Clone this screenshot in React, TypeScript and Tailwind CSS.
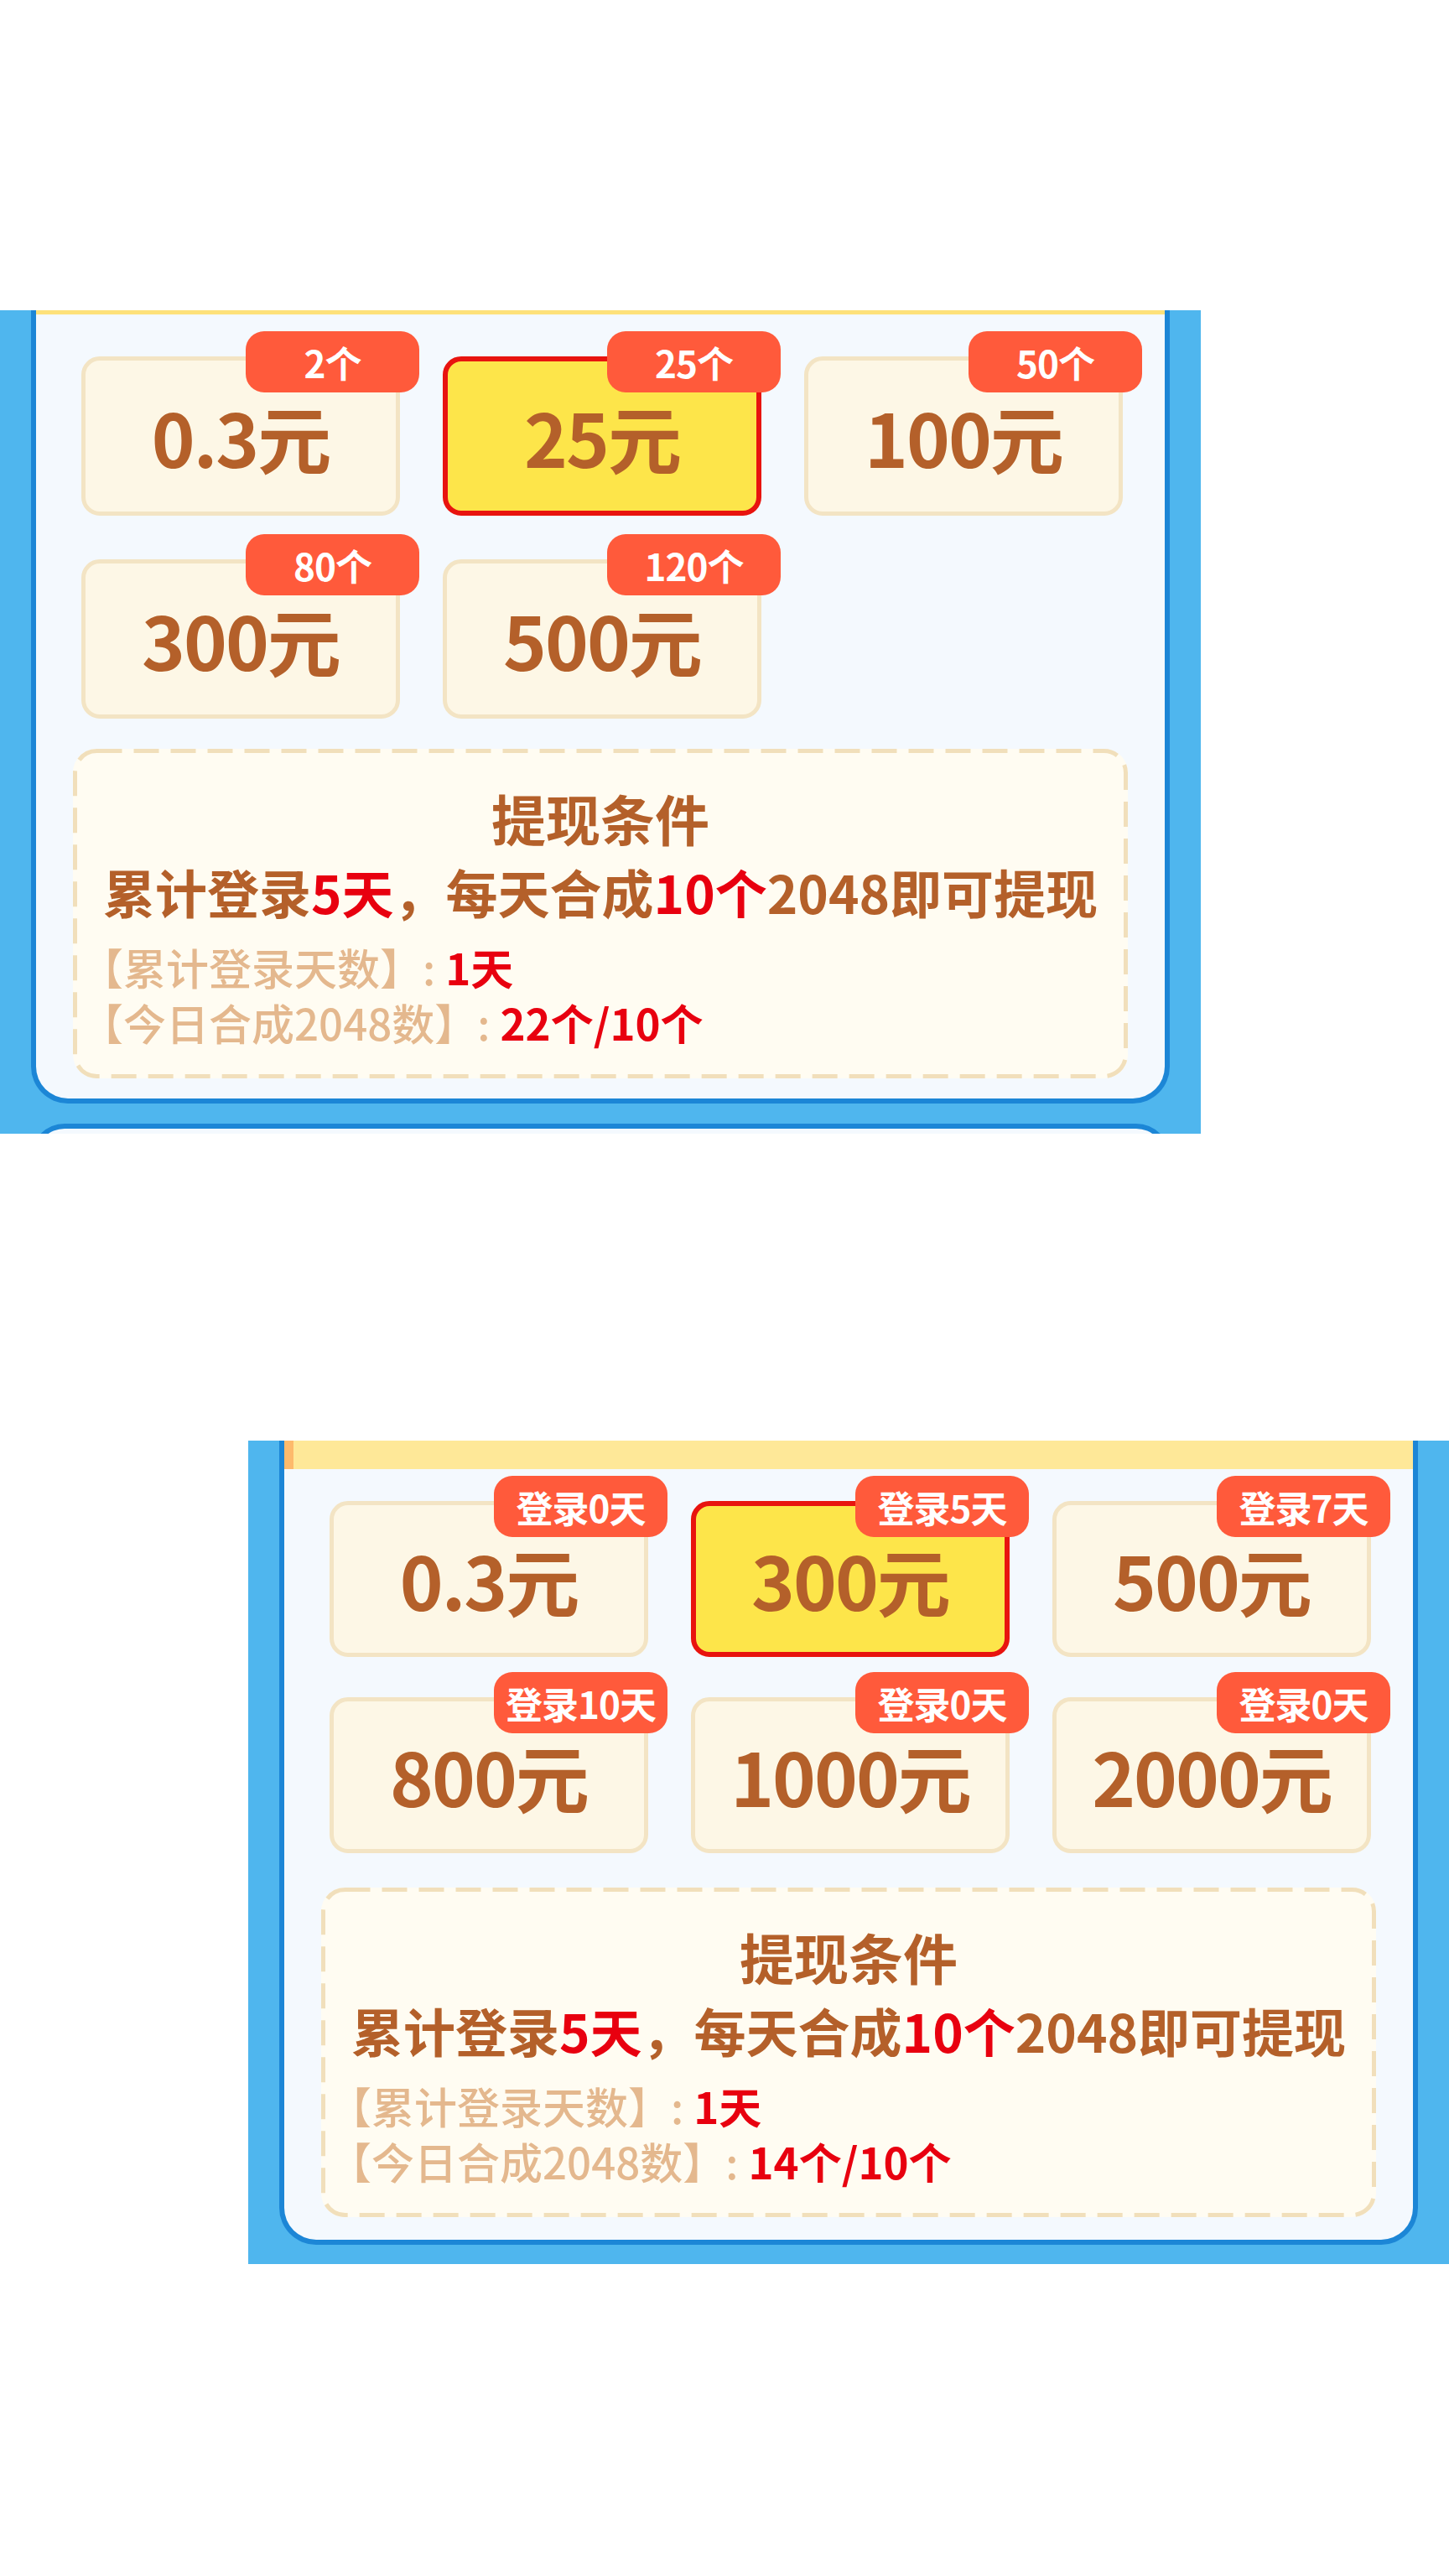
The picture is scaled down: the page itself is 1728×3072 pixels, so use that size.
import React from 'react';

type Tier = { amount: string; tag: string; active?: boolean };

type Progress = { days: string; merged: string };

const firstTiers: Tier[] = [
  { amount: '0.3元', tag: '2个' },
  { amount: '25元', tag: '25个', active: true },
  { amount: '100元', tag: '50个' },
  { amount: '300元', tag: '80个' },
  { amount: '500元', tag: '120个' },
];

const secondTiers: Tier[] = [
  { amount: '0.3元', tag: '登录0天' },
  { amount: '300元', tag: '登录5天', active: true },
  { amount: '500元', tag: '登录7天' },
  { amount: '800元', tag: '登录10天' },
  { amount: '1000元', tag: '登录0天' },
  { amount: '2000元', tag: '登录0天' },
];

const TierCard: React.FC<{ tier: Tier; h: string }> = ({ tier, h }) => (
  <div className={`relative ${h}`}>
    <div
      className={`flex h-full w-full items-center justify-center rounded-[22px] ${
        tier.active ? 'border-[6px] border-[#e8140f] bg-[#fde54a]' : 'border-[5px] border-[#f3e4c4] bg-[#fdf7e6]'
      }`}
    >
      <span className="inline-block h-[88px] overflow-visible text-[88px] font-bold leading-[88px] tracking-[-2px] text-[#b4602a]">
        {tier.amount}
      </span>
    </div>
    {/* count tag sitting over the top-right corner */}
    <div className="absolute -right-[23px] -top-[30px] flex h-[73px] w-[207px] items-center justify-center rounded-[22px] bg-[#ff5a3b]">
      <span className="text-[44px] font-bold leading-none tracking-[-1px] text-white">{tier.tag}</span>
    </div>
  </div>
);

const Conditions: React.FC<{ p: Progress; cls: string }> = ({ p, cls }) => (
  <div className={`relative mx-[44px] rounded-[28px] bg-[#fffcf2] ${cls}`}>
    <svg className="absolute inset-0 h-full w-full" preserveAspectRatio="none">
      <rect x="2.5" y="2.5" width="calc(100% - 5px)" height="calc(100% - 5px)" rx="26" fill="none" stroke="#f1dfbb" strokeWidth="5" strokeDasharray="30 14" />
    </svg>
    <div className="relative flex flex-col pb-[34px] pt-[42px]">
      <div className="text-center text-[65px] font-bold leading-[80px] text-[#b4602a]">提现条件</div>
      <div className="mt-[8px] whitespace-nowrap text-center text-[62px] font-bold leading-[80px] text-[#b4602a]">
        累计登录<span className="text-[#e8000f]">5天</span>，每天合成<span className="text-[#e8000f]">10个</span>2048即可提现
      </div>
      <div className="mt-[17px] flex flex-col pl-[9px] text-[51px] leading-[66px]">
        <div className="h-[66px]">
          <span className="inline-block font-medium text-[#e4b88e]">【累计登录天数】:</span>
          <span className="ml-[12px] inline-block font-bold text-[#e8000f]">{p.days}</span>
        </div>
        <div className="h-[66px]">
          <span className="inline-block font-medium text-[#e4b88e]">【今日合成2048数】:</span>
          <span className="ml-[12px] inline-block font-bold text-[#e8000f]">{p.merged}</span>
        </div>
      </div>
    </div>
  </div>
);

const WithdrawPanel: React.FC<{
  tiers: Tier[];
  p: Progress;
  band: 'thin' | 'thick';
  peek?: boolean;
}> = ({ tiers, p, band, peek }) => {
  const thick = band === 'thick';
  return (
    <div className="h-[982px] w-[1432px] overflow-hidden bg-[#4fb6ee] px-[37px]">
      <div className="flex flex-col rounded-b-[44px] border-x-[6px] border-b-[6px] border-[#1c86d6] bg-[#f4f9fe]">
        {thick ? (
          <div className="h-[34px] border-l-[11px] border-[#fdba6c] bg-[#fee898]" />
        ) : (
          <div className="h-[5px] bg-[#fde17a]" />
        )}
        <div
          className={`ml-[54px] grid w-[1242px] grid-cols-3 gap-x-[51px] ${
            thick ? 'mt-[38px] gap-y-[48px]' : 'mt-[50px] gap-y-[52px]'
          }`}
        >
          {tiers.map((t) => (
            <TierCard key={t.amount + t.tag} tier={t} h={thick ? 'h-[186px]' : 'h-[190px]'} />
          ))}
        </div>
        <Conditions p={p} cls={thick ? 'mt-[41px] mb-[27px]' : 'mt-[36px] mb-[24px]'} />
      </div>
      {peek && (
        <div className="mt-[24px] h-[40px] rounded-t-[44px] border-x-[6px] border-t-[6px] border-[#1c86d6] bg-[#f4f9fe]" />
      )}
    </div>
  );
};

export default function App() {
  return (
    <div className="flex min-h-[3072px] w-[1728px] flex-col bg-white pt-[370px] font-['Noto_Sans_CJK_SC','Noto_Sans',sans-serif]">
      <WithdrawPanel tiers={firstTiers} p={{ days: '1天', merged: '22个/10个' }} band="thin" peek />
      <div className="ml-[296px] mt-[366px]">
        <WithdrawPanel tiers={secondTiers} p={{ days: '1天', merged: '14个/10个' }} band="thick" />
      </div>
    </div>
  );
}
